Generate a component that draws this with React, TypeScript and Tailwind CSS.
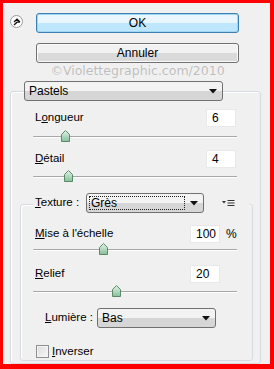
import React from 'react'

const font = { fontFamily: '"Liberation Sans", Arial, sans-serif' }

function Thumb() {
  return (
    <svg width="9" height="12" viewBox="0 0 9 12">
      <defs>
        <linearGradient id="tg" x1="0" y1="0" x2="0" y2="1">
          <stop offset="0" stopColor="#e4f4e8" />
          <stop offset="1" stopColor="#86bf98" />
        </linearGradient>
      </defs>
      <path d="M4.5 0.5 L8.5 4.5 L8.5 11.5 L0.5 11.5 L0.5 4.5 Z" fill="url(#tg)" stroke="#5a8a68" strokeWidth="1" />
    </svg>
  )
}

function Slider({ at, className }: { at: number; className: string }) {
  return (
    <div className={`relative h-[14px] pt-[6px] ${className}`}>
      <div className="h-[2px] rounded-l-full border-t border-[#a7a7a7] border-b border-b-white" />
      <div className="absolute top-0" style={{ left: at - 4 }}>
        <Thumb />
      </div>
    </div>
  )
}

function Arrow() {
  return (
    <svg width="8" height="5" viewBox="0 0 8 5">
      <path d="M0 0 L8 0 L4 4.5 Z" fill="#111" />
    </svg>
  )
}

function Dropdown({ label, className, focus }: { label: string; className: string; focus?: boolean }) {
  return (
    <div
      className={`flex h-[20px] items-center rounded-[3px] border border-[#707070] bg-gradient-to-b from-[#f3f3f3] from-50% to-[#d6d6d6] to-50% text-[12px] text-black ${className}`}
    >
      <div className={`ml-[2px] flex h-[14px] flex-1 items-center pl-[1px] ${focus ? 'border border-dotted border-[#222]' : 'border border-transparent'}`}>
        {label}
      </div>
      <div className="flex w-[18px] justify-center">
        <Arrow />
      </div>
    </div>
  )
}

function NumBox({ value }: { value: string }) {
  return (
    <div className="flex h-[18px] w-[30px] items-center border border-[#e8e8e8] bg-white pl-[5px] text-[12px] text-black">
      {value}
    </div>
  )
}

export default function App() {
  return (
    <div
      className="box-border h-[369px] w-[274px] overflow-hidden border-[3px] border-r-4 border-b-[5px] border-[#ff0000] bg-[#f0f0f0] text-[11.5px] text-black"
      style={font}
    >
      {/* Header buttons */}
      <div className="flex items-start">
        <div className="ml-[7px] mt-[12px] flex h-[13px] w-[13px] items-center justify-center rounded-full border border-[#9a9a9a] bg-white">
          <svg width="8" height="8" viewBox="0 0 8 8">
            <path d="M1 4 L4 1.2 L7 4 M1 7 L4 4.2 L7 4" fill="none" stroke="#111" strokeWidth="1.3" />
          </svg>
        </div>
        <div className="ml-[13px] mt-[10px] flex w-[203px] flex-col">
          <div className="flex h-[20px] items-center justify-center rounded-[3px] border border-[#3c7fb1] bg-gradient-to-b from-[#eaf6fd] from-50% to-[#bee6fd] to-50% text-[12px] shadow-[inset_0_0_0_1px_#9fd5f5]">
            OK
          </div>
          <div className="mt-[10px] flex h-[20px] items-center justify-center rounded-[3px] border border-[#707070] bg-gradient-to-b from-[#f2f2f2] from-50% to-[#dadada] to-50% text-[12px] shadow-[inset_0_0_0_1px_#fbfbfb]">
            Annuler
          </div>
          <div
            className="mt-[2px] text-center text-[12.5px] leading-[12px] text-[#bdbdbd] [text-shadow:0_0_1px_#ffffff]"
            style={{ fontFamily: '"DejaVu Sans", sans-serif' }}
          >
            ©Violettegraphic.com/2010
          </div>
        </div>
      </div>

      {/* Filter select */}
      <Dropdown label="Pastels" className="relative z-10 ml-[21px] mt-[4px] w-[199px]" />

      {/* Outer group */}
      <div className="-mt-[10px] ml-[7px] h-[273px] w-[251px] rounded-[3px] border border-[#d5dbe0] shadow-[inset_1px_1px_0_#ffffff]">
        <div className="mt-[17px] flex items-center justify-between pl-[24px] pr-[24px]">
          <span>
            L<span className="underline">o</span>ngueur
          </span>
          <NumBox value="6" />
        </div>
        <Slider at={32} className="ml-[22px] mr-[23px] mt-[3px]" />

        <div className="mt-[6px] flex items-center justify-between pl-[24px] pr-[24px]">
          <span>
            <span className="underline">D</span>étail
          </span>
          <NumBox value="4" />
        </div>
        <Slider at={35} className="ml-[22px] mr-[23px] mt-[2px]" />

        {/* Texture group */}
        <div className="relative z-10 ml-[22px] mt-[9px] flex w-[216px] items-center bg-[#f0f0f0] px-[2px]">
          <span className="w-[51px]">
            <span className="underline">T</span>exture :
          </span>
          <Dropdown label="Grès" focus className="w-[118px]" />
          <svg className="ml-[18px]" width="13" height="8" viewBox="0 0 13 8">
            <path d="M0 2 L4 2 L2 4.5 Z" fill="#333" />
            <path d="M5.5 1.5 H12.5 M5.5 4 H12.5 M5.5 6.5 H12.5" stroke="#333" strokeWidth="1" />
          </svg>
        </div>
        <div className="-mt-[9px] ml-[9px] h-[157px] w-[233px] rounded-[3px] border border-[#d5dbe0] shadow-[inset_1px_1px_0_#ffffff]">
          <div className="mt-[20px] flex items-center pl-[14px] pr-[16px]">
            <span className="flex-1">
              <span className="underline">M</span>ise à l'échelle
            </span>
            <NumBox value="100" />
            <span className="ml-[6px] w-[10px] text-[12px]">%</span>
          </div>
          <Slider at={70} className="ml-[12px] mr-[15px]" />

          <div className="mt-[8px] flex items-center pl-[14px] pr-[32px]">
            <span className="flex-1">
              <span className="underline">R</span>elief
            </span>
            <NumBox value="20" />
          </div>
          <Slider at={83} className="ml-[12px] mr-[15px] mt-[2px]" />

          <div className="mt-[9px] flex items-center pl-[24px]">
            <span className="w-[52px]">
              <span className="underline">L</span>umière :
            </span>
            <Dropdown label="Bas" className="w-[119px]" />
          </div>

          <div className="mt-[15px] flex items-center pl-[15px]">
            <div className="h-[13px] w-[13px] border border-[#8f8f8f] bg-gradient-to-br from-[#dcdcdc] to-[#f8f8f8] shadow-[inset_0_0_0_1px_#f4f4f4]" />
            <span className="ml-[3px]">
              <span className="underline">I</span>nverser
            </span>
          </div>
        </div>
      </div>
    </div>
  )
}
